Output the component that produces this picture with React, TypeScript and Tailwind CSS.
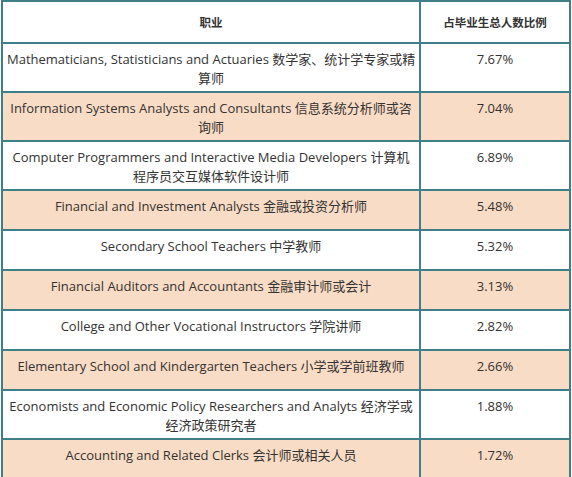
const rows: { lines: string[]; pct: string; shade: boolean }[] = [
  { lines: ["Mathematicians, Statisticians and Actuaries 数学家、统计学专家或精", "算师"], pct: "7.67%", shade: false },
  { lines: ["Information Systems Analysts and Consultants 信息系统分析师或咨", "询师"], pct: "7.04%", shade: true },
  { lines: ["Computer Programmers and Interactive Media Developers 计算机", "程序员交互媒体软件设计师"], pct: "6.89%", shade: false },
  { lines: ["Financial and Investment Analysts 金融或投资分析师"], pct: "5.48%", shade: true },
  { lines: ["Secondary School Teachers 中学教师"], pct: "5.32%", shade: false },
  { lines: ["Financial Auditors and Accountants 金融审计师或会计"], pct: "3.13%", shade: true },
  { lines: ["College and Other Vocational Instructors 学院讲师"], pct: "2.82%", shade: false },
  { lines: ["Elementary School and Kindergarten Teachers 小学或学前班教师"], pct: "2.66%", shade: true },
  { lines: ["Economists and Economic Policy Researchers and Analyts 经济学或", "经济政策研究者"], pct: "1.88%", shade: false },
  { lines: ["Accounting and Related Clerks 会计师或相关人员"], pct: "1.72%", shade: true },
];

export default function App() {
  return (
    <div
      className="min-h-screen bg-white pl-[1px] pt-[0px] text-[#333333]"
      style={{ fontFamily: '"Open Sans", "Noto Sans CJK SC", sans-serif' }}
    >
      <table className="w-[570px] table-fixed border-collapse border-2 border-[#3f7f87] text-[13px] leading-[19px]">
        <colgroup>
          <col className="w-[418px]" />
          <col />
        </colgroup>
        <thead>
          <tr className="h-[42px]">
            <th className="border-2 border-[#3f7f87] align-middle text-center text-[11.5px] font-bold">职业</th>
            <th className="border-2 border-[#3f7f87] align-middle text-center text-[11.5px] font-bold">占毕业生总人数比例</th>
          </tr>
        </thead>
        <tbody>
          {rows.map((r) => (
            <tr
              key={r.pct}
              className={`${r.lines.length > 1 ? "h-[49px]" : "h-[40px]"} ${r.shade ? "bg-[#f9dcc5]" : "bg-white"}`}
            >
              <td className="border-2 border-[#3f7f87] px-1 pt-[6px] align-top text-center whitespace-nowrap">
                {r.lines.map((l, i) => (
                  <div key={i}>{l}</div>
                ))}
              </td>
              <td className="border-2 border-[#3f7f87] px-1 pt-[6px] align-top text-center">{r.pct}</td>
            </tr>
          ))}
        </tbody>
      </table>
    </div>
  );
}
